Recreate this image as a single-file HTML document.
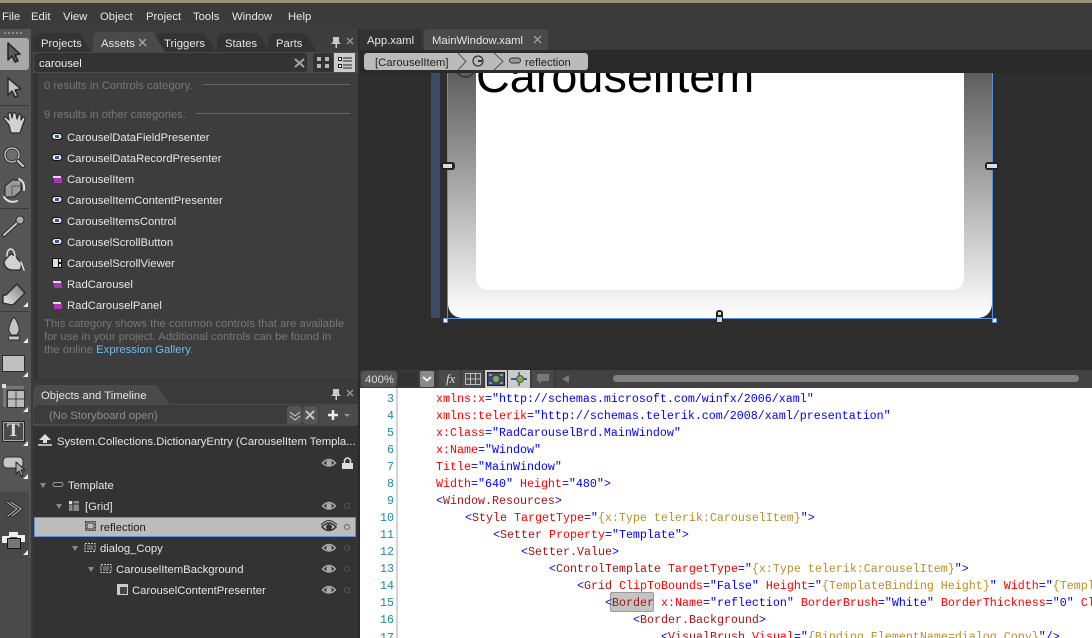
<!DOCTYPE html>
<html><head><meta charset="utf-8"><style>
html,body{margin:0;padding:0;background:#3a3a3a}
#r{position:relative;width:1092px;height:638px;overflow:hidden;background:#3a3a3a;font:11.3px "Liberation Sans",sans-serif;color:#e6e6e6}
#r div,#r span.t,#r svg{position:absolute}
.t{white-space:nowrap;line-height:14px;margin-top:1px}
.g{color:#777}
.c{position:absolute;left:0;white-space:pre;font:11.67px/17px "Liberation Mono",monospace;color:#00f}
.n{position:absolute;width:34px;text-align:right;left:360px;font:11.67px/17px "Liberation Mono",monospace;color:#1f8c96}
i{font-style:normal}
.a{color:#f00}.m{color:#a31515}.y{color:#b8902a}.b{color:#00f}
.tab{background:#333;clip-path:polygon(0 100%,0 4px,4px 0,calc(100% - 12px) 0,100% 100%)}
</style></head><body><div id="r">
<!-- top -->
<div style="left:0;top:0;width:1092px;height:3px;background:#97917f"></div>
<div style="left:0;top:3px;width:1092px;height:23px;background:#3b3b3b"></div>
<span class="t" style="left:2px;top:9px">File</span>
<span class="t" style="left:31px;top:9px">Edit</span>
<span class="t" style="left:63px;top:9px">View</span>
<span class="t" style="left:100px;top:9px">Object</span>
<span class="t" style="left:146px;top:9px">Project</span>
<span class="t" style="left:193px;top:9px">Tools</span>
<span class="t" style="left:232px;top:9px">Window</span>
<span class="t" style="left:288px;top:9px">Help</span>
<!-- toolbar -->
<div style="left:0;top:29px;width:31px;height:529px;background:#555"></div>
<div style="left:0;top:558px;width:31px;height:80px;background:#4a4a4a"></div>
<div style="left:0;top:26px;width:33px;height:3px;background:#3b3b3b"></div>
<div style="left:31px;top:29px;width:2px;height:609px;background:#3a3a3a"></div>
<div style="left:4px;top:32px;width:19px;height:2px;background:repeating-linear-gradient(90deg,#8a8a8a 0 2px,transparent 2px 4px)"></div>
<div style="left:0;top:38px;width:29px;height:32px;background:#a8a8a8;border-radius:0 3px 3px 0"></div>
<div style="left:0;top:105px;width:29px;height:1px;background:#3b3b3b"></div>
<div style="left:0;top:208px;width:29px;height:1px;background:#3b3b3b"></div>
<div style="left:0;top:311px;width:29px;height:1px;background:#3b3b3b"></div>
<div style="left:0;top:492px;width:29px;height:66px;background:#484848;border-radius:0 3px 3px 0"></div>
<svg style="left:0;top:0" width="33" height="638" viewBox="0 0 33 638" fill="none" stroke-linejoin="round" stroke-linecap="round">
<defs><linearGradient id="er" x1="0" y1="1" x2="1" y2="0"><stop offset="0" stop-color="#eee"/><stop offset="1" stop-color="#777"/></linearGradient></defs>
<path d="M8 43 L8 60 L12 56 L15 62 L18 61 L15 55 L20 54Z" fill="#5a5a5a" stroke="#222" stroke-width="1.500"/>
<path d="M8 78 L8 95 L12 91 L15 97 L18 96 L15 90 L21 89Z" fill="#c4c4c4" stroke="#2c2c2c" stroke-width="1.500"/>
<path d="M9 125 L4 119 Q3 117 6 117 L9 120 L8 114 Q9 112 11 113 L12 118 L13 113 Q15 112 16 114 L17 119 L19 114 Q21 114 21 116 L21 120 L23 117 Q25 117 25 119 L22 127 L20 133 L11 133Z" fill="#d2d2d2" stroke="#2c2c2c" stroke-width="1.200"/>
<circle cx="12" cy="155" r="7" fill="#6e6e6e" stroke="#2c2c2c" stroke-width="3"/><circle cx="12" cy="155" r="7" stroke="#c8c8c8" stroke-width="1.300"/><path d="M18 161 L23 166" stroke="#2c2c2c" stroke-width="4"/><path d="M18 161 L23 166" stroke="#c8c8c8" stroke-width="2.200"/>
<path d="M5 186 L12 180 L21 180 L21 191 L14 197 L5 197Z" fill="#9a9a9a" stroke="#2c2c2c" stroke-width="1.200"/><path d="M12 186 H21 M12 186 V197" stroke="#555"/><path d="M4 197 Q9 204 17 201 M19 179 Q25 182 24 190" stroke="#ddd" stroke-width="2"/>
<path d="M4 235 L17 223" stroke="#2a2a2a" stroke-width="4"/><path d="M4 235 L17 223" stroke="#c8c8c8" stroke-width="2"/><circle cx="20" cy="220" r="4" fill="#aaa" stroke="#2a2a2a"/>
<path d="M11 254 Q6 258 4 262 Q5 270 13 270 L20 270 Q22 267 21 263 L15 256Z" fill="#d2d2d2" stroke="#2c2c2c" stroke-width="1.200"/><path d="M7 256 Q7 249 11 249 Q15 250 15 258 M21 262 L24 270" stroke="#ddd" stroke-width="1.500"/>
<path d="M3 303 L3 295 L6 295 L17 284 L25 293 L14 304 L12 305Z" fill="url(#er)" stroke="#2c2c2c" stroke-width="1.400"/>
<path d="M13 318 Q8 327 9 331 L11 335 L17 335 L19 331 Q20 327 15 318Z" fill="#c4c4c4" stroke="#2c2c2c"/><path d="M8 336 L20 336 L19 340 L9 340Z" fill="#c4c4c4" stroke="#2c2c2c"/>
<rect x="2.500" y="355.500" width="22" height="16" fill="#c0c0c0" stroke="#2c2c2c"/>
<rect x="3" y="386" width="21" height="3" fill="#777"/><rect x="3" y="386" width="3" height="21" fill="#777"/><rect x="7.500" y="390.500" width="17" height="17" fill="#bbb" stroke="#333"/><path d="M16 390 V407 M8 399 H24" stroke="#444"/><rect x="2" y="384" width="4" height="4" fill="#ddd"/>
<rect x="2.500" y="421.500" width="22" height="20" fill="#4a4a4a" stroke="#222"/><rect x="3.500" y="422.500" width="20" height="18" stroke="#aaa"/>
<rect x="3" y="457" width="20" height="11" rx="4" fill="#c6c6c6" stroke="#2c2c2c"/><path d="M16 462 L16 474 L19 471 L21 476 L23 475 L21 470 L25 470Z" fill="#aaa" stroke="#222"/>
<path d="M7 502 L17 509 L8 516 M11 502 L21 509 L12 516" stroke="#2c2c2c" stroke-width="3"/><path d="M7 502 L17 509 L8 516 M11 502 L21 509 L12 516" stroke="#bbb"/>
<rect x="2" y="536" width="8" height="7" fill="#eee" rx="1"/><rect x="9" y="532" width="9" height="5" fill="#eee"/><rect x="17" y="535" width="8" height="7" fill="#eee"/><rect x="7.500" y="538.500" width="13" height="10" fill="#777" stroke="#111"/>
<path fill="#eee" stroke="none" d="M28 307 V302 L23 307Z M28 343 V338 L23 343Z M28 377 V372 L23 377Z M28 412 V407 L23 412Z M28 446 V441 L23 446Z M28 479 V474 L23 479Z M28 555 V550 L23 555Z"/>
</svg>
<span class="t" style="left:7px;top:421px;margin:0;color:#ddd;font:bold 19px/20px 'Liberation Serif',serif">T</span>
<!-- assets panel -->
<div style="left:33px;top:29px;width:325px;height:350px;background:#3d3d3d"></div>
<div style="left:358px;top:29px;width:2px;height:350px;background:#2e2e2e"></div>
<div class="tab" style="left:33px;top:33px;width:59px;height:19px"></div>
<div class="tab" style="left:155px;top:33px;width:61px;height:19px"></div>
<div class="tab" style="left:217px;top:33px;width:53px;height:19px"></div>
<div class="tab" style="left:268px;top:33px;width:49px;height:19px"></div>
<div class="tab" style="left:93px;top:32px;width:72px;height:20px;background:#4a4a4a"></div>
<span class="t" style="left:41px;top:36px">Projects</span>
<span class="t" style="left:101px;top:36px">Assets</span>
<svg style="left:138px;top:38px" width="9" height="9"><path d="M1 1L8 8M8 1L1 8" stroke="#aaa" stroke-width="1.300"/></svg>
<span class="t" style="left:164px;top:36px">Triggers</span>
<span class="t" style="left:225px;top:36px">States</span>
<span class="t" style="left:276px;top:36px">Parts</span>
<svg style="left:330px;top:36px" width="26" height="12" viewBox="0 0 26 12"><path d="M3 1H9V6L11 8H7V12H5.500V8H1L3 6Z" fill="#c8c8c8"/><path d="M17 2L23 8M23 2L17 8" stroke="#999" stroke-width="1.400"/></svg>
<div style="left:33px;top:52px;width:325px;height:21px;background:#4a4a4a"></div>
<div style="left:34px;top:53px;width:273px;height:19px;background:#333;border-radius:3px"></div>
<span class="t" style="left:39px;top:56px;color:#eee">carousel</span>
<svg style="left:294px;top:58px" width="11" height="10"><path d="M1 1L10 9M10 1L1 9" stroke="#a8a8a8" stroke-width="2"/></svg>
<div style="left:313px;top:53px;width:20px;height:19px;background:#333"></div>
<div style="left:334px;top:53px;width:21px;height:19px;background:#ccc"></div>
<svg style="left:316px;top:56px" width="38" height="14"><g fill="#b5b5b5"><rect x="1" y="1" width="4" height="4"/><rect x="9" y="1" width="4" height="4"/><rect x="1" y="8" width="4" height="4"/><rect x="9" y="8" width="4" height="4"/></g><g fill="#fff" stroke="#222"><rect x="22.500" y="1.500" width="3" height="3"/><rect x="22.500" y="8.500" width="3" height="3"/></g><path d="M27 2H36M27 5H36M27 9H36M27 12H36" stroke="#222"/></svg>
<div style="left:33px;top:73px;width:5px;height:306px;background:#333"></div>
<span class="t g" style="left:44px;top:78px">0 results in Controls category.</span>
<div style="left:203px;top:84px;width:147px;height:1px;background:#666"></div>
<span class="t g" style="left:44px;top:107px">9 results in other categories.</span>
<div style="left:196px;top:113px;width:154px;height:1px;background:#666"></div>
<span class="t" style="left:67px;top:130px">CarouselDataFieldPresenter</span>
<span class="t" style="left:67px;top:151px">CarouselDataRecordPresenter</span>
<span class="t" style="left:67px;top:172px">CarouselItem</span>
<span class="t" style="left:67px;top:193px">CarouselItemContentPresenter</span>
<span class="t" style="left:67px;top:214px">CarouselItemsControl</span>
<span class="t" style="left:67px;top:235px">CarouselScrollButton</span>
<span class="t" style="left:67px;top:256px">CarouselScrollViewer</span>
<span class="t" style="left:67px;top:277px">RadCarousel</span>
<span class="t" style="left:67px;top:298px">RadCarouselPanel</span>
<svg style="left:50px;top:130px" width="14" height="190" viewBox="0 0 14 190">
<g fill="#e8e8e8" stroke="#111"><rect x="2" y="3.500" width="10" height="6" rx="3"/><rect x="2" y="24.500" width="10" height="6" rx="3"/><rect x="2" y="66.500" width="10" height="6" rx="3"/><rect x="2" y="87.500" width="10" height="6" rx="3"/><rect x="2" y="108.500" width="10" height="6" rx="3"/></g>
<g fill="#3c5a9c"><rect x="5" y="5" width="4" height="3"/><rect x="5" y="26" width="4" height="3"/><rect x="5" y="68" width="4" height="3"/><rect x="5" y="89" width="4" height="3"/><rect x="5" y="110" width="4" height="3"/></g>
<path d="M3 46H11V48H3Z M3 151H11V153H3Z M3 172H11V174H3Z" fill="#ddd"/>
<path d="M4 48H12V53H4Z M4 153H12V158H4Z M4 174H12V179H4Z" fill="#b030c0"/>
<rect x="2" y="128" width="10" height="10" fill="#111"/><rect x="3" y="129" width="5" height="8" fill="#ddd"/><rect x="9" y="129" width="2" height="3" fill="#ddd"/><rect x="9" y="134" width="2" height="3" fill="#ddd"/>
</svg>
<span class="t g" style="left:44px;top:316px">This category shows the common controls that are available</span>
<span class="t g" style="left:44px;top:329px">for use in your project. Additional controls can be found in</span>
<span class="t g" style="left:44px;top:342px">the online <span style="color:#6cbcf0">Expression Gallery</span>.</span>
<!-- objects panel -->
<div style="left:33px;top:379px;width:325px;height:25px;background:#3a3a3a"></div>
<div style="left:33px;top:385px;width:137px;height:19px;background:#4a4a4a;clip-path:polygon(0 100%,0 4px,4px 0,calc(100% - 14px) 0,100% 100%)"></div>
<span class="t" style="left:41px;top:388px">Objects and Timeline</span>
<svg style="left:330px;top:388px" width="26" height="12" viewBox="0 0 26 12"><path d="M3 1H9V6L11 8H7V12H5.500V8H1L3 6Z" fill="#c8c8c8"/><path d="M17 2L23 8M23 2L17 8" stroke="#999" stroke-width="1.400"/></svg>
<div style="left:33px;top:404px;width:325px;height:22px;background:#4a4a4a"></div>
<div style="left:34px;top:405px;width:285px;height:19px;background:#3c3c3c;border-radius:3px"></div>
<span class="t" style="left:49px;top:408px;color:#8e8e8e">(No Storyboard open)</span>
<div style="left:287px;top:406px;width:15px;height:18px;background:#555;border-radius:3px"></div>
<div style="left:303px;top:406px;width:15px;height:18px;background:#555;border-radius:3px"></div>
<svg style="left:288px;top:408px" width="66" height="14"><path d="M2 4L7 8L12 4M2 8L7 12L12 8" stroke="#ccc" fill="none"/><path d="M18 3L26 11M26 3L18 11" stroke="#ccc" stroke-width="1.800"/><path d="M45 2V12M40 7H50" stroke="#eee" stroke-width="2.500"/><path d="M56 6H62L59 9Z" fill="#999"/></svg>
<div style="left:33px;top:426px;width:325px;height:212px;background:#333"></div>
<div style="left:358px;top:379px;width:2px;height:259px;background:#2a2a2a"></div>
<svg style="left:36px;top:432px" width="20" height="16"><path d="M2 13H16" stroke="#ddd" stroke-width="1.500"/><path d="M9 2L15 8H3Z M7 8H11V11H7Z" fill="#ddd"/></svg>
<span class="t" style="left:57px;top:434px">System.Collections.DictionaryEntry (CarouselItem Templa...</span>
<svg width="360" height="638" style="left:0;top:0" fill="none">
<defs><g id="e"><path d="M-6.500 0Q0 -7 6.500 0Q0 6 -6.500 0Z" fill="#2c2c2c" stroke="#aaa" stroke-width="1.500"/><circle r="2.800" fill="#aaa"/></g></defs>
<use href="#e" x="329" y="463"/><use href="#e" x="329" y="506"/><use href="#e" x="329" y="548"/><use href="#e" x="329" y="569"/><use href="#e" x="329" y="590"/>
<path d="M342 463H353V469H342Z" fill="#ddd"/><path d="M344.500 463V460Q347.500 456 350.500 460V463" stroke="#ddd" stroke-width="1.500"/>
<g stroke="#555"><circle cx="347" cy="506" r="2.500"/><circle cx="347" cy="548" r="2.500"/><circle cx="347" cy="569" r="2.500"/><circle cx="347" cy="590" r="2.500"/></g>
<path d="M40 483H46L43 488Z M56 504H62L59 509Z M72 546H78L75 551Z M88 567H94L91 572Z" fill="#888"/>
<rect x="53" y="482.500" width="10" height="4" rx="2" stroke="#999"/>
<rect x="69" y="501" width="10" height="10" fill="#888"/><path d="M69 504H79M73 501V511" stroke="#333"/><rect x="69" y="501" width="3" height="3" fill="#ddd"/>
<rect x="85" y="543.500" width="10" height="8" stroke="#ccc" stroke-dasharray="2 1"/><rect x="87" y="545" width="6" height="5" fill="#666"/>
<rect x="101" y="564.500" width="10" height="8" stroke="#ccc" stroke-dasharray="2 1"/><rect x="103" y="566" width="6" height="5" fill="#666"/>
<rect x="117" y="584" width="11" height="11" fill="#ccc"/><path d="M120 594V587H127V594Z" fill="#444"/>
</svg>
<span class="t" style="left:68px;top:478px">Template</span>
<span class="t" style="left:85px;top:499px">[Grid]</span>
<div style="left:34px;top:517px;width:320px;height:18px;background:#bcbcbc;border:1px solid #5d8fdc"></div>
<span class="t" style="left:100px;top:520px;color:#222">reflection</span>
<svg style="left:80px;top:518px" width="280" height="18" fill="none"><rect x="5.500" y="3.500" width="10" height="9" stroke="#333" stroke-dasharray="2 1"/><rect x="7" y="5" width="7" height="6" stroke="#333"/><path d="M242 9Q249 1 256 9Q249 16 242 9Z" stroke="#333" stroke-width="1.500"/><path d="M241 7Q249 -2 257 7" stroke="#333"/><circle cx="249" cy="9" r="3" fill="#333"/><circle cx="267" cy="9" r="2.500" stroke="#666"/></svg>
<span class="t" style="left:100px;top:541px">dialog_Copy</span>
<span class="t" style="left:116px;top:562px">CarouselItemBackground</span>
<span class="t" style="left:132px;top:583px">CarouselContentPresenter</span>
<!-- tabs doc -->
<div style="left:360px;top:26px;width:732px;height:24px;background:#3b3b3b"></div>
<div style="left:360px;top:29px;width:62px;height:21px;background:#333;border-radius:4px 4px 0 0"></div>
<div style="left:424px;top:29px;width:124px;height:21px;background:#4a4a4a;border-radius:4px 4px 0 0"></div>
<span class="t" style="left:367px;top:33px">App.xaml</span>
<span class="t" style="left:432px;top:33px">MainWindow.xaml</span>
<svg style="left:533px;top:35px" width="10" height="9"><path d="M1 1L8 8M8 1L1 8" stroke="#aaa" stroke-width="1.200"/></svg>
<!-- canvas -->
<div style="left:360px;top:50px;width:732px;height:320px;background:#2d2d2d"></div>
<div style="left:431px;top:73px;width:9px;height:245px;background:#3b4a66"></div>
<div style="left:447px;top:60px;width:546px;height:259px;overflow:hidden">
<div style="left:1px;top:0;width:544px;height:258px;border-radius:0 0 14px 14px;background:linear-gradient(180deg,#4f4f4f 0,#5e5e5e 13px,#fff 258px)"></div>
<div style="left:0;top:0;width:1px;height:258px;background:#5b8fdc"></div>
<div style="left:545px;top:0;width:1px;height:258px;background:#5b8fdc"></div>
<div style="left:0;top:258px;width:546px;height:1px;background:#5b8fdc"></div>
<div style="left:29px;top:0;width:488px;height:230px;background:#fff;border-radius:0 0 12px 12px"></div>
</div>
<div style="left:455px;top:57px;width:21px;height:21px;border-radius:50%;border:2px solid #3a3a3a;box-sizing:border-box;clip-path:polygon(0 60%,100% 60%,100% 100%,0 100%)"></div>
<span class="t" style="left:476px;top:45px;font-size:46.800px;line-height:60px;color:#000">CarouselItem</span>
<div style="left:360px;top:50px;width:732px;height:23px;background:#2a2a2a"></div>
<div style="left:364px;top:53px;width:224px;height:17px;background:#bbb;border-radius:3px"></div>
<svg style="left:455px;top:53px" width="115" height="17" fill="none"><path d="M3 0L11 8.500L3 17M39 0L48 8.500L39 17" stroke="#555"/><circle cx="23" cy="8" r="5" stroke="#333" stroke-width="1.200"/><path d="M23 8H27" stroke="#333" stroke-width="2"/><rect x="54.500" y="5" width="11" height="5" rx="2.500" stroke="#333" fill="#999"/></svg>
<span class="t" style="left:375px;top:55px;color:#222">[CarouselItem]</span>
<span class="t" style="left:525px;top:55px;color:#222">reflection</span>
<!-- handles -->
<div style="left:443px;top:318px;width:3px;height:3px;background:#fff;border:1px solid #5b8fdc"></div>
<div style="left:992px;top:318px;width:3px;height:3px;background:#fff;border:1px solid #5b8fdc"></div>
<div style="left:716px;top:310px;width:7px;height:13px;background:#222;border-radius:3px"></div>
<div style="left:718px;top:312px;width:3px;height:3px;background:#ddd"></div>
<div style="left:717px;top:317px;width:5px;height:5px;background:#bcd4f8"></div>
<div style="left:441px;top:162px;width:14px;height:8px;background:#222;border-radius:3px"></div>
<div style="left:443px;top:164px;width:9px;height:4px;background:#ddd"></div>
<div style="left:985px;top:162px;width:14px;height:8px;background:#222;border-radius:3px"></div>
<div style="left:987px;top:164px;width:9px;height:4px;background:#ddd"></div>
<div style="left:994px;top:164px;width:3px;height:4px;background:#cfe0fa"></div>
<!-- zoom bar -->
<div style="left:360px;top:370px;width:732px;height:18px;background:#3d3d3d"></div>
<div style="left:361px;top:371px;width:36px;height:16px;background:#555;border-radius:4px"></div>
<span class="t" style="left:365px;top:372px;color:#ddd">400%</span>
<div style="left:397px;top:371px;width:21px;height:16px;background:#333"></div>
<div style="left:420px;top:371px;width:14px;height:16px;background:#8a8a8a;border-radius:2px"></div>
<svg style="left:422px;top:376px" width="10" height="6"><path d="M1 1L5 4.500L9 1" stroke="#eee" stroke-width="2" fill="none"/></svg>
<div style="left:439px;top:370px;width:21px;height:18px;background:#4a4a4a"></div>
<span class="t" style="left:446px;top:372px;margin:0;font:italic 13px/14px 'Liberation Serif',serif;color:#ddd">fx</span>
<div style="left:462px;top:370px;width:21px;height:18px;background:#4a4a4a"></div>
<svg style="left:465px;top:373px" width="16" height="12"><path d="M.5 .5H15.500V11.500H.5ZM.5 6H15.500M5.500 .5V11.500M10.500 .5V11.500" stroke="#bbb" fill="none"/></svg>
<div style="left:485px;top:370px;width:22px;height:18px;background:#ccc"></div>
<svg style="left:487px;top:372px" width="18" height="14"><rect x=".5" y=".5" width="17" height="13" fill="#3a4a66" stroke="#222"/><circle cx="9" cy="7" r="3" fill="#7db040"/><path d="M2 3H5M13 3H16M2 11H5M13 11H16" stroke="#ddd"/></svg>
<div style="left:508px;top:370px;width:22px;height:18px;background:#ccc"></div>
<svg style="left:511px;top:372px" width="17" height="14"><path d="M0 7H16" stroke="#3a5a90" stroke-width="2"/><path d="M8 0V14" stroke="#555" stroke-width="1.500"/><circle cx="9" cy="7" r="3.500" fill="#7db040" stroke="#456"/></svg>
<div style="left:532px;top:370px;width:21px;height:18px;background:#4a4a4a"></div>
<svg style="left:536px;top:373px" width="14" height="12"><path d="M1 1H13V8H6L3 11V8H1Z" fill="#777"/></svg>
<div style="left:556px;top:370px;width:536px;height:18px;background:#424242"></div>
<svg style="left:562px;top:375px" width="8" height="8"><path d="M0 4L7 0V8Z" fill="#777"/></svg>
<div style="left:613px;top:375px;width:466px;height:7px;background:#808080;border-radius:4px"></div>
<!-- code -->
<div style="left:360px;top:388px;width:732px;height:250px;background:#fff;overflow:hidden"></div>
<div style="left:396px;top:388px;width:2px;height:250px;background:#d4d4d4"></div>
<div style="left:610px;top:592px;width:44px;height:20px;background:#c4c4c4;border:1px solid #999;border-radius:2px;box-sizing:border-box"></div>
<div style="left:0;top:0;width:1092px;height:638px;overflow:hidden">
<span class="n" style="top:391px">3</span><span class="n" style="top:408px">4</span><span class="n" style="top:425px">5</span><span class="n" style="top:442px">6</span><span class="n" style="top:459px">7</span><span class="n" style="top:476px">8</span><span class="n" style="top:493px">9</span><span class="n" style="top:510px">10</span><span class="n" style="top:527px">11</span><span class="n" style="top:544px">12</span><span class="n" style="top:561px">13</span><span class="n" style="top:578px">14</span><span class="n" style="top:595px">15</span><span class="n" style="top:612px">16</span><span class="n" style="top:630px">17</span>
<span class="c" style="left:436px;top:391px"><i class="a">xmlns:x</i>="http://schemas.microsoft.com/winfx/2006/xaml"</span>
<span class="c" style="left:436px;top:408px"><i class="a">xmlns:telerik</i>="http://schemas.telerik.com/2008/xaml/presentation"</span>
<span class="c" style="left:436px;top:425px"><i class="a">x:Class</i>="RadCarouselBrd.MainWindow"</span>
<span class="c" style="left:436px;top:442px"><i class="a">x:Name</i>="Window"</span>
<span class="c" style="left:436px;top:459px"><i class="a">Title</i>="MainWindow"</span>
<span class="c" style="left:436px;top:476px"><i class="a">Width</i>="640" <i class="a">Height</i>="480"&gt;</span>
<span class="c" style="left:436px;top:493px">&lt;<i class="m">Window.Resources</i>&gt;</span>
<span class="c" style="left:465px;top:510px">&lt;<i class="m">Style</i> <i class="a">TargetType</i>="<i class="y">{x:Type telerik:CarouselItem}</i>"&gt;</span>
<span class="c" style="left:493px;top:527px">&lt;<i class="m">Setter</i> <i class="a">Property</i>="Template"&gt;</span>
<span class="c" style="left:521px;top:544px">&lt;<i class="m">Setter.Value</i>&gt;</span>
<span class="c" style="left:549px;top:561px">&lt;<i class="m">ControlTemplate</i> <i class="a">TargetType</i>="<i class="y">{x:Type telerik:CarouselItem}</i>"&gt;</span>
<span class="c" style="left:577px;top:578px">&lt;<i class="m">Grid</i> <i class="a">ClipToBounds</i>="False" <i class="a">Height</i>="<i class="y">{TemplateBinding Height}</i>" <i class="a">Width</i>="<i class="y">{TemplateBinding Width}</i>"&gt;</span>
<span class="c" style="left:605px;top:595px">&lt;<i class="m">Border</i> <i class="a">x:Name</i>="reflection" <i class="a">BorderBrush</i>="White" <i class="a">BorderThickness</i>="0" <i class="a">ClipToBounds</i>="False"&gt;</span>
<span class="c" style="left:633px;top:612px">&lt;<i class="m">Border.Background</i>&gt;</span>
<span class="c" style="left:661px;top:629px">&lt;<i class="m">VisualBrush</i> <i class="a">Visual</i>="<i class="y">{Binding ElementName=dialog_Copy}</i>"/&gt;</span>
</div>
</div></body></html>
